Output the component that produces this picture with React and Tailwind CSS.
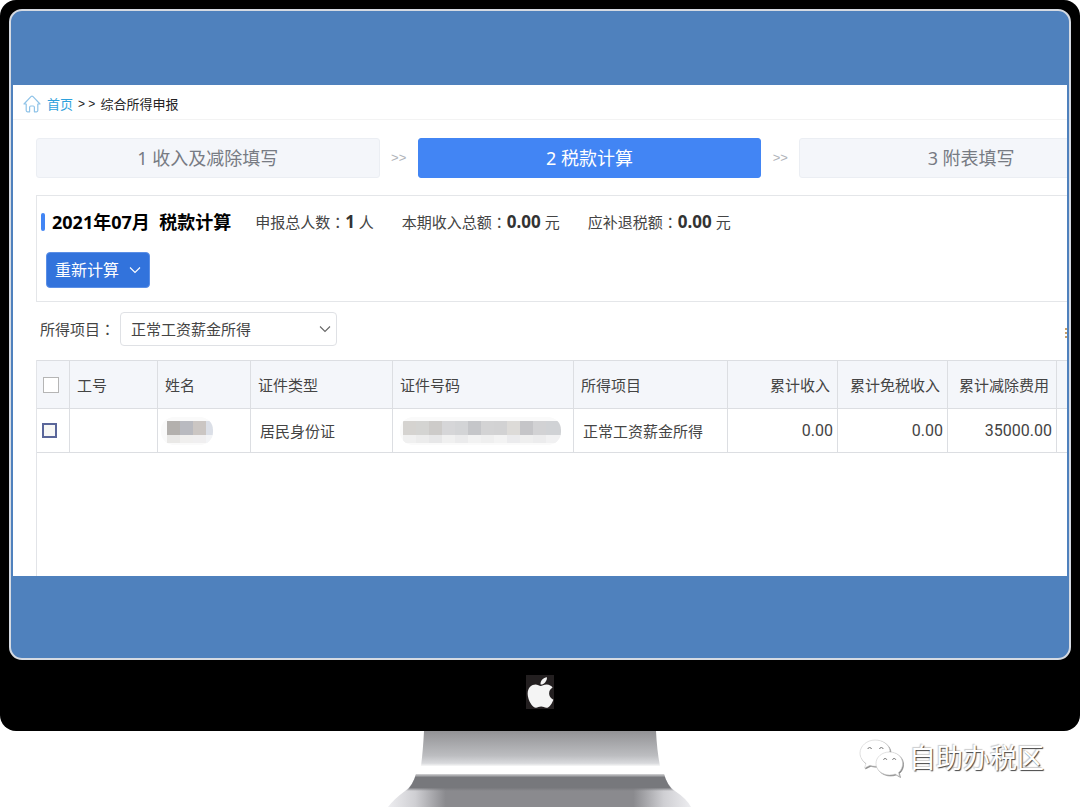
import React from 'react';
import { FaApple } from 'react-icons/fa';

function HomeIcon() {
  return (
    <svg width="18" height="18" viewBox="0 0 18 18" fill="none" stroke="#8fc3e8" strokeWidth="1.2" strokeLinejoin="round" strokeLinecap="round" aria-hidden="true">
      <path d="M1 9 L8.2 1.4 Q9 .8 9.8 1.4 L17 9 H14.8 V15.6 Q14.8 16.8 13.6 16.8 H11.4 V12.4 Q11.4 11 10.2 11 H7.8 Q6.6 11 6.6 12.4 V16.8 H4.4 Q3.2 16.8 3.2 15.6 V9 Z" />
    </svg>
  );
}

function Chevron({ className }) {
  return (
    <svg className={className} width="12" height="8" viewBox="0 0 12 8" fill="none" stroke="currentColor" strokeWidth="1.1" aria-hidden="true">
      <path d="M1 1.5 L6 6.5 L11 1.5" />
    </svg>
  );
}

function Mosaic({ id, width, left, top, bottom }) {
  return (
    <svg width={width} height="28" className="block" aria-hidden="true">
      <clipPath id={id}>
        <rect width={width} height="28" rx="13" />
      </clipPath>
      <g clipPath={`url(#${id})`}>
        <rect width={width} height="28" fill="#fafafa" />
        {top.map((c, i) => (
          <rect key={i} x={left + i * 13} y="4" width="13" height="14" fill={c} />
        ))}
        {bottom.map((c, i) => (
          <rect key={i} x={left + i * 13} y="18" width="13" height="8" fill={c} />
        ))}
      </g>
    </svg>
  );
}

function Step({ active, children }) {
  return (
    <button
      type="button"
      className={
        'h-10 w-1/3 shrink-0 rounded-[3px] border text-[18px] leading-6 ' +
        (active ? 'border-[#4285f4] bg-[#4285f4] text-white' : 'border-[#ebeef3] bg-[#f4f6fa] text-[#777b83]')
      }
    >
      {children}
    </button>
  );
}

function StepArrow() {
  return <span className="w-[38px] shrink-0 text-center font-['Liberation_Sans'] text-[13px] text-[#b0b3b9]">&gt;&gt;</span>;
}

function Stat({ label, value, unit }) {
  return (
    <span className="whitespace-nowrap">
      {label}<span className="font-['Noto_Sans_CJK_TC']" lang="zh-TW">：</span>
      <b className="text-[17px] font-bold text-[#333]">{value}</b> {unit}
    </span>
  );
}

const columns = [
  { label: '工号', width: 'w-[88px]' },
  { label: '姓名', width: 'w-[93px]' },
  { label: '证件类型', width: 'w-[142px]' },
  { label: '证件号码', width: 'w-[181px]' },
  { label: '所得项目', width: 'w-[154px]' },
  { label: '累计收入', width: 'w-[110px]', right: true },
  { label: '累计免税收入', width: 'w-[110px]', right: true },
  { label: '累计减除费用', width: 'w-[109px]', right: true },
];

const cell = 'border-r border-b border-[#dcdee2]';
const amount = "pr-1 text-right font-['Roboto'] text-[16px]";

function TaxTable() {
  return (
    <div className="mt-[14px] min-h-[216px] border-l border-[#e2e4e8]">
      <table className="w-full table-fixed border-separate border-spacing-0 border-t border-[#dcdee2] whitespace-nowrap text-[15px] leading-5 text-[#444]">
        <thead>
          <tr className="h-12 bg-[#f4f6fa]">
            <th className={`w-[33px] pl-[6px] text-left ${cell}`}>
              <input type="checkbox" aria-label="全选" className="block size-4 appearance-none border border-[#b5b5b5] bg-white" />
            </th>
            {columns.map((c) => (
              <th key={c.label} className={`px-[7px] font-normal ${c.width} ${c.right ? 'text-right' : 'text-left'} ${cell}`}>
                {c.label}
              </th>
            ))}
            <th className="border-b border-[#dcdee2]" />
          </tr>
        </thead>
        <tbody>
          <tr className="h-11">
            <td className={`pl-[5px] ${cell}`}>
              <input type="checkbox" aria-label="选择" className="block size-[15px] appearance-none border-2 border-[#5a6699] bg-[#f7f7f5]" />
            </td>
            <td className={cell} />
            <td className={`pl-[3px] ${cell}`}>
              <Mosaic id="name" width={52} left={6} top={['#b3b0ad', '#b9bac0', '#cbc6c3', '#dbdfe7']} bottom={['#e9e8e6', '#f0efee', '#f0eff0', '#f3f4f6']} />
            </td>
            <td className={`pl-[9px] ${cell}`}>居民身份证</td>
            <td className={`pl-[7px] ${cell}`}>
              <Mosaic
                id="number"
                width={161}
                left={3}
                top={['#d5d3d0', '#d4d4d2', '#cdcbc9', '#d6d6d8', '#d3d4d6', '#c5c6c9', '#d3d3d4', '#d2d2d3', '#dddbd8', '#c5c5c8', '#d2d2d4', '#d0d2d5', '#d0d2d5']}
                bottom={['#f0f0f0', '#ececec', '#e7e7e8', '#f0f0f0', '#ebebec', '#f2f2f2', '#efefef', '#f3f3f3', '#ebebed', '#efefef', '#ececed', '#f1f1f2', '#f1f1f2']}
              />
            </td>
            <td className={`pl-[9px] ${cell}`}>正常工资薪金所得</td>
            <td className={`${amount} ${cell}`}>0.00</td>
            <td className={`${amount} ${cell}`}>0.00</td>
            <td className={`${amount} ${cell}`}>35000.00</td>
            <td className="border-b border-[#dcdee2]" />
          </tr>
        </tbody>
      </table>
    </div>
  );
}

function Stand() {
  return (
    <svg className="mx-auto block" width="304" height="76" viewBox="0 0 304 76" aria-hidden="true">
      <defs>
        <linearGradient id="neck" x1="0" y1="0" x2="0" y2="1">
          <stop offset="0" stopColor="#929295" />
          <stop offset=".7" stopColor="#bcbdc0" />
          <stop offset=".92" stopColor="#d8d9dc" />
          <stop offset="1" stopColor="#f8f8f8" />
        </linearGradient>
        <linearGradient id="base" x1="0" y1="0" x2="1" y2="0">
          <stop offset="0" stopColor="#ededf0" />
          <stop offset=".09" stopColor="#cfcfd3" />
          <stop offset=".19" stopColor="#8a8a8e" />
          <stop offset=".81" stopColor="#8a8a8e" />
          <stop offset=".91" stopColor="#cfcfd3" />
          <stop offset="1" stopColor="#ededf0" />
        </linearGradient>
        <linearGradient id="lip" x1="0" y1="0" x2="0" y2="1">
          <stop offset="0" stopColor="#d5d5d7" />
          <stop offset=".2" stopColor="#77787c" />
          <stop offset=".8" stopColor="#77787c" />
          <stop offset="1" stopColor="#77787c" stopOpacity="0" />
        </linearGradient>
      </defs>
      <path d="M36 0 H268 Q269 20 272 35 H33 Q35 20 36 0 Z" fill="url(#neck)" />
      <path d="M28 43 H276 Q279 54 287 60 Q299 68 303 76 H0 Q6 68 17 60 Q25 54 28 43 Z" fill="url(#base)" />
      <path d="M28 43 H276 Q279 54 286 60 H18 Q25 54 28 43 Z" fill="url(#lip)" />
    </svg>
  );
}

function Watermark() {
  return (
    <div className="absolute top-[7px] right-9 flex items-center gap-[6px]">
      <svg width="44" height="40" viewBox="0 0 44 40" fill="#fff" stroke="#ccc" strokeWidth=".6" className="drop-shadow-[1px_1px_0px_#888]" aria-hidden="true">
        <path d="M16 2 C8 2 1 8 1 15 C1 19.500 3.500 23 7 25.500 L5.500 30 L11 27.300 C14 28.300 17 28.500 19.500 27.800 L31 13 C30 6 23.500 2 16 2 Z" />
        <path d="M30.500 14 C23 14 17 19 17 25.500 C17 32 23 37 30.500 37 C32.500 37 34.500 36.700 36.200 36 L40.500 38.500 L39.500 34.500 C42.200 32.300 43.600 29 43.600 25.500 C43.600 19 38 14 30.500 14 Z" />
        <g fill="none" stroke="#777" strokeWidth="1">
          <path d="M8.800 11 A1.900 1.900 0 0 1 12.500 11" />
          <path d="M20.500 11 A1.900 1.900 0 0 1 24.200 11" />
          <path d="M24.500 21.800 A1.700 1.700 0 0 1 27.800 21.800" />
          <path d="M33.500 21.800 A1.700 1.700 0 0 1 36.800 21.800" />
        </g>
      </svg>
      <span className="text-[27px] leading-10 text-white [text-shadow:1px_1px_1px_#444,-1px_-1px_1px_#ccc]">自助办税区</span>
    </div>
  );
}

export default function App() {
  return (
    <div className="overflow-hidden bg-white font-['Noto_Sans','Noto_Sans_CJK_SC',sans-serif]">
      <div className="rounded-[16px] bg-black px-[9px] pt-[9px]">
        <div className="overflow-hidden rounded-[13px] border-2 border-[#d5dae2] bg-[#4f81bd] px-[2px] pt-[74px] pb-[82px]">
          <main className="overflow-hidden bg-white">
            <nav className="flex h-[35px] items-center border-b border-[#f3f3f3] pt-1 pl-[10px] text-[13px] leading-5 text-[#222]">
              <HomeIcon />
              <a href="#home" className="ml-[6px] text-[#2ea1dc]">首页</a>
              <span className="mx-[5px] font-['Liberation_Sans'] text-[12px]">&gt; &gt;</span>
              <span>综合所得申报</span>
            </nav>
            <div className="pt-[18px] pl-[23px]">
              <div className="flex items-center">
                <Step>1 收入及减除填写</Step>
                <StepArrow />
                <Step active>2 税款计算</Step>
                <StepArrow />
                <Step>3 附表填写</Step>
              </div>

              <section className="mt-[17px] h-[107px] border border-r-0 border-[#e4e6e9] pt-[14px]">
                <div className="flex items-center pl-1 text-[15px] leading-6 text-[#444]">
                  <span className="h-[18px] w-1 rounded-[2px] bg-[#4285f4]" />
                  <h1 className="ml-[7px] text-[18px] font-bold whitespace-pre text-black">2021年07月  税款计算</h1>
                  <div className="ml-6 flex gap-7">
                    <Stat label="申报总人数" value="1" unit="人" />
                    <Stat label="本期收入总额" value="0.00" unit="元" />
                    <Stat label="应补退税额" value="0.00" unit="元" />
                  </div>
                </div>
                <button type="button" className="mt-[18px] ml-[9px] flex h-9 items-center gap-[10px] rounded-[4px] border border-[#5b8fe6] bg-[#3273dc] px-[8px] text-[16px] text-white">
                  重新计算
                  <Chevron />
                </button>
              </section>

              <div className="mt-[10px] flex items-center text-[15px] leading-5 text-[#444]">
                <label htmlFor="income" className="w-[84px] pl-[4px]">
                  所得项目<span className="font-['Noto_Sans_CJK_TC']" lang="zh-TW">：</span>
                </label>
                <div className="relative">
                  <select id="income" className="block h-[34px] w-[217px] appearance-none rounded-[4px] border border-[#dfe1e5] bg-white pl-[10px] text-[15px] text-[#444]">
                    <option>正常工资薪金所得</option>
                  </select>
                  <Chevron className="pointer-events-none absolute top-[13px] right-[6px] text-[#666]" />
                </div>
                <svg width="2" height="10" viewBox="0 0 2 10" className="mt-2 ml-auto" aria-hidden="true">
                  <path d="M1 0 V2 M1 4 V6 M1 8 V10" stroke="#c9a06a" strokeWidth="2" />
                </svg>
              </div>

              <TaxTable />
            </div>
          </main>
        </div>
        <div className="flex h-[71px] justify-center pt-[15px]">
          <div className="flex h-[34px] w-7 items-center justify-center bg-[#231f20]">
            <FaApple className="h-[35px] w-[35px] shrink-0 text-[#f4f4f4]" />
          </div>
        </div>
      </div>
      <footer className="relative">
        <Stand />
        <Watermark />
      </footer>
    </div>
  );
}
